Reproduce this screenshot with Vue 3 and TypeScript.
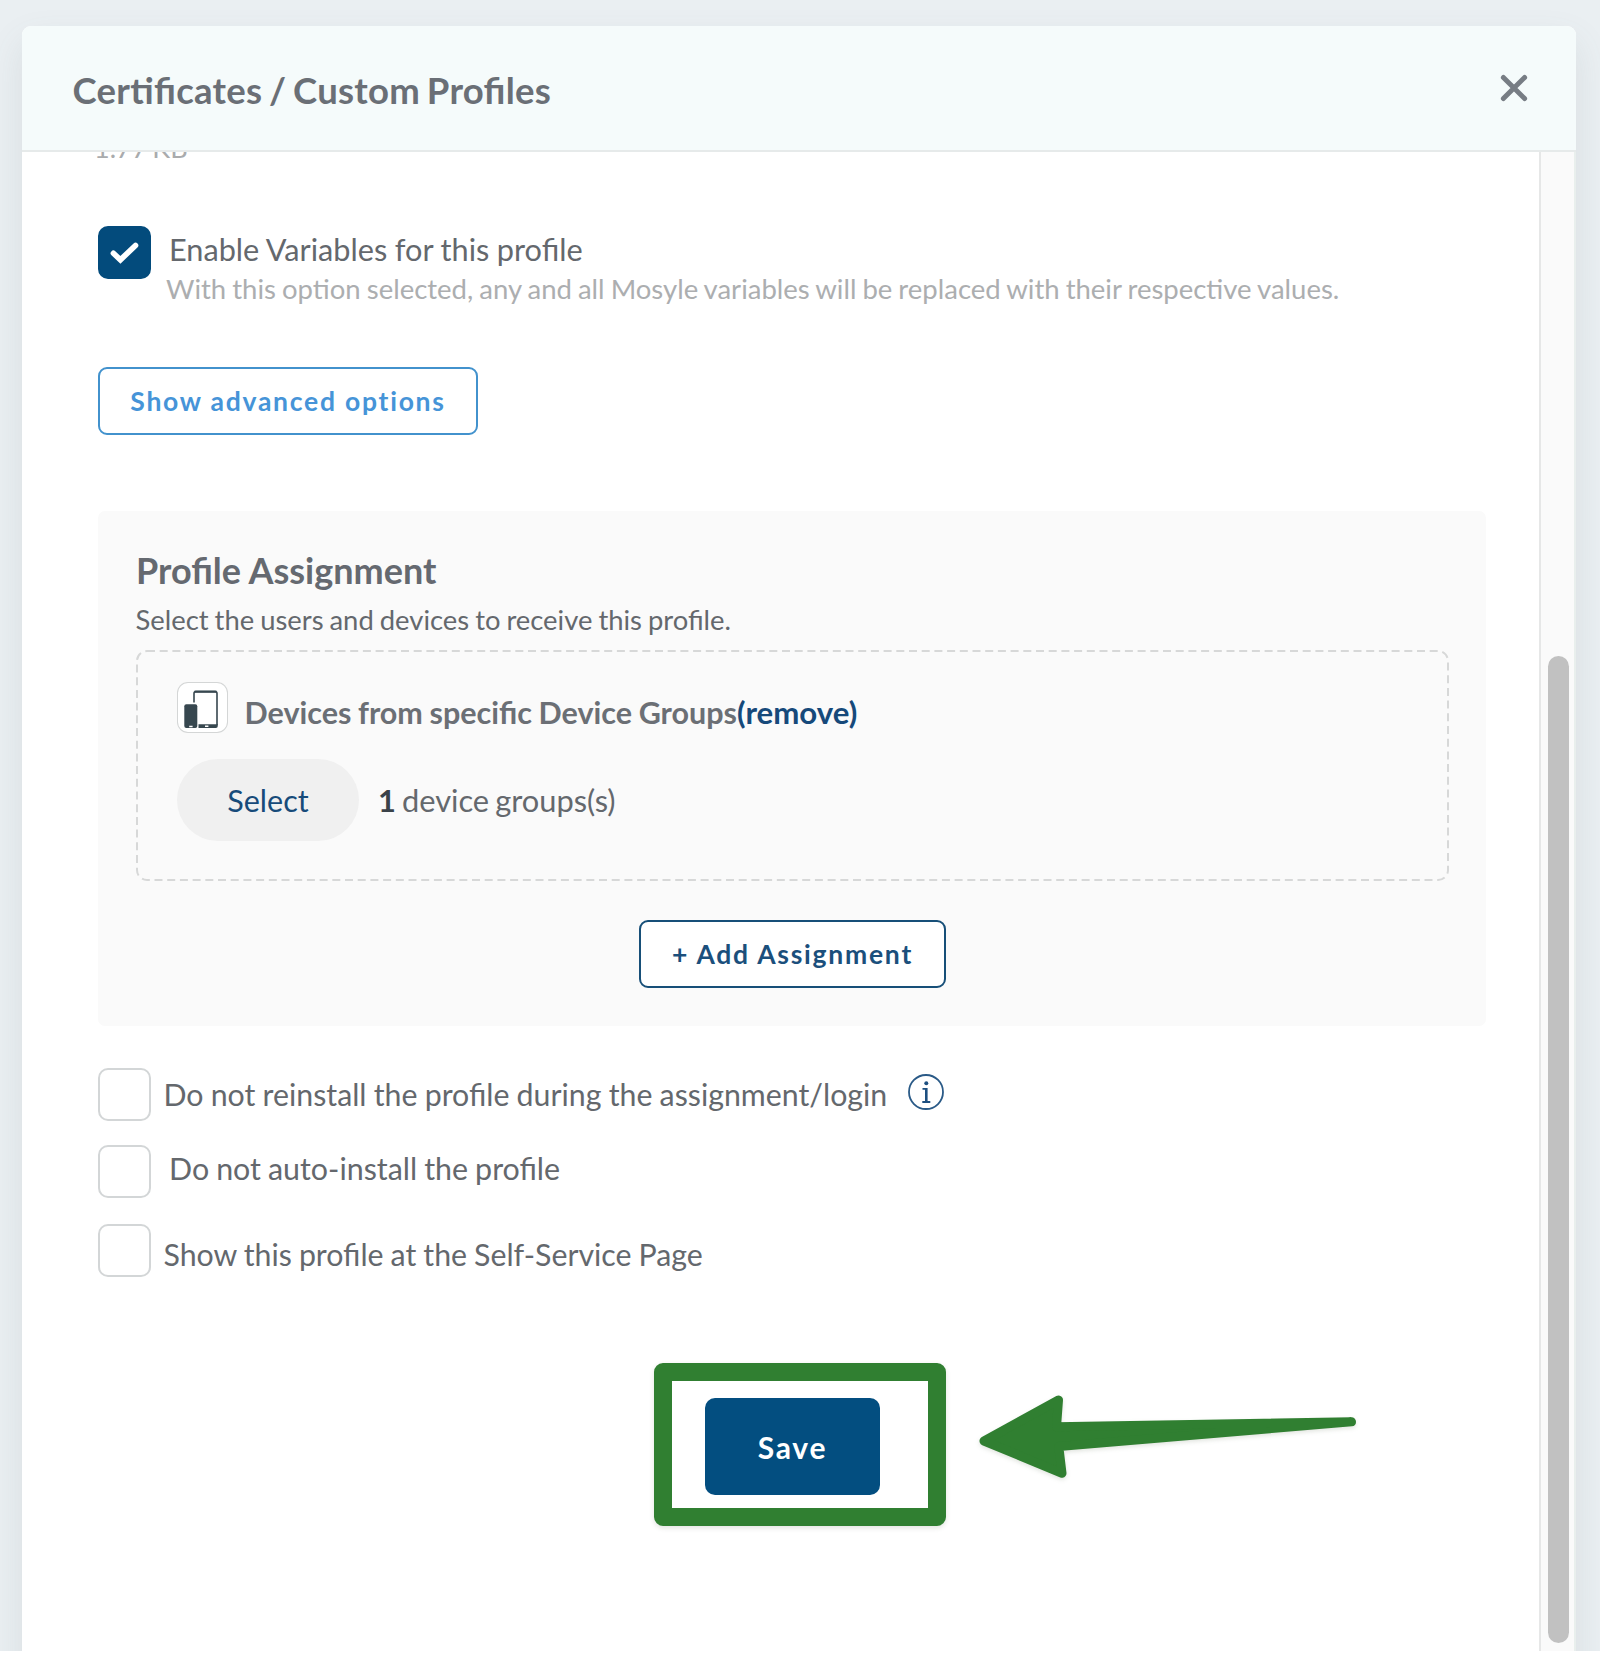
<script setup lang="ts">
import { ref } from 'vue'

interface Option {
  id: string
  label: string
  info: boolean
  checked: boolean
}

const enableVariables = ref(true)
const groupCount = ref(1)
const options = ref<Option[]>([
  { id: 'reinstall', label: 'Do not reinstall the profile during the assignment/login', info: true, checked: false },
  { id: 'auto', label: 'Do not auto-install the profile', info: false, checked: false },
  { id: 'self', label: 'Show this profile at the Self-Service Page', info: false, checked: false },
])
</script>

<template>
  <div class="page">
    <section class="modal">
      <header class="modal-head">
        <h1 class="title">Certificates / Custom Profiles</h1>
        <button class="close" aria-label="Close">
          <svg width="28" height="28" viewBox="0 0 28 28">
            <path d="M3.4 3.4 24.6 24.6M24.6 3.4 3.4 24.6" fill="none" stroke="#777d84" stroke-width="5" stroke-linecap="round" />
          </svg>
        </button>
      </header>

      <div class="modal-body">
        <main class="content">
          <div class="file-size">1.77 KB</div>

          <div class="enable">
            <span class="check" :class="{ on: enableVariables }" @click="enableVariables = !enableVariables">
              <svg v-if="enableVariables" width="30" height="24" viewBox="0 0 30 24">
                <path d="M3.400 12.300 10.400 18.800 25.500 4.500" fill="none" stroke="#fff" stroke-width="5.600" stroke-linecap="round" />
              </svg>
            </span>
            <div class="enable-text">
              <div class="enable-label">Enable Variables for this profile</div>
              <div class="enable-hint">With this option selected, any and all Mosyle variables will be replaced with their respective values.</div>
            </div>
          </div>

          <button class="outline light">Show advanced options</button>

          <div class="panel">
            <h2 class="panel-title">Profile Assignment</h2>
            <p class="panel-hint">Select the users and devices to receive this profile.</p>

            <div class="group">
              <svg class="dashes" width="1313" height="231">
                <rect x="1" y="1" width="1311" height="229" rx="10" fill="none" stroke="#d7d8d8" stroke-width="2" stroke-dasharray="8 4.7" />
              </svg>
              <div class="group-head">
                <span class="device-icon">
                  <svg width="51" height="51" viewBox="0 0 51 51">
                    <path d="M17 20.500V11.500a2 2 0 0 1 2-2H38a2 2 0 0 1 2 2V43" fill="none" stroke="#37474f" stroke-width="1.600" />
                    <path d="M17.500 9.700H39.500" stroke="#37474f" stroke-width="2.200" />
                    <path d="M21.500 42.300H40.800V44a2 2 0 0 1-2 2H21.500z" fill="#37474f" />
                    <rect x="7.300" y="22.300" width="13" height="23.600" rx="2" fill="#37474f" />
                    <path d="M12.200 44.500h3.400M28 44.200h3.400" stroke="#fff" stroke-width="1.400" />
                  </svg>
                </span>
                <strong class="group-name">Devices from specific Device Groups<a class="remove">(remove)</a></strong>
              </div>
              <div class="group-row">
                <button class="select">Select</button>
                <span class="count"><b>{{ groupCount }}</b> device groups(s)</span>
              </div>
            </div>

            <button class="outline dark">+ Add Assignment</button>
          </div>

          <div class="options">
            <div v-for="o in options" :key="o.id" class="option" :class="o.id">
              <span class="check" :class="{ on: o.checked }" @click="o.checked = !o.checked"></span>
              <span class="option-label">{{ o.label }}</span>
              <svg v-if="o.info" class="info" width="36" height="36" viewBox="0 0 36 36">
                <circle cx="18" cy="18" r="17" fill="none" stroke="#2a5a87" stroke-width="1.800" />
                <circle cx="18.300" cy="9.300" r="2" fill="#1d4f80" />
                <path d="M14.500 14.800H18.900M14.300 28H22.300" fill="none" stroke="#1d4f80" stroke-width="1.800" />
                <path d="M18.300 14V28" stroke="#1d4f80" stroke-width="2.600" />
              </svg>
            </div>
          </div>

          <div class="save-area">
            <div class="highlight">
              <button class="save">Save</button>
            </div>
            <svg class="arrow" width="390" height="96" viewBox="0 0 390 96">
              <path class="arrow-shape" d="M6 47 80.500 6 78.500 32.800 373.500 27.800 80.800 52.600 84 79.300Z" />
            </svg>
          </div>
        </main>

        <aside class="track"><div class="thumb"></div></aside>
      </div>
    </section>
  </div>
</template>

<style>
body {
  margin: 0;
  background: #fff;
}
</style>

<style scoped>
* {
  box-sizing: border-box;
}
.page {
  width: 1600px;
  height: 1651px;
  padding: 26px 24px 0 22px;
  overflow: hidden;
  background: #eaeff2;
  font-family: Lato, 'Liberation Sans', sans-serif;
  color: #64686d;
}
h1, h2, p {
  margin: 0;
}
button {
  padding: 0;
  font-family: inherit;
  cursor: pointer;
}
.modal {
  width: 1554px;
  height: 1700px;
  border-radius: 9px 9px 0 0;
  background: #fff;
  box-shadow: 0 16px 36px rgba(90, 110, 110, 0.12);
}
.modal-head {
  display: flex;
  justify-content: space-between;
  align-items: flex-start;
  height: 126px;
  padding: 41px 48px 0 50px;
  border-bottom: 2px solid #e6eaea;
  border-radius: 9px 9px 0 0;
  background: #f5fbfb;
}
.title {
  margin-left: 0.5px;
  font-size: 36.5px;
  line-height: 47px;
  font-weight: 700;
  letter-spacing: 0.28px;
  word-spacing: -2.5px;
  font-feature-settings: 'liga' 1;
  color: #6a6f76;
  white-space: nowrap;
}
.close {
  height: 28px;
  margin-top: 7px;
  border: 0;
  background: none;
}
.close svg {
  display: block;
}
.modal-body {
  display: flex;
  height: 1499px;
  overflow: hidden;
}
.content {
  flex: 1;
  padding-left: 76px;
}
.file-size {
  height: 32px;
  margin: -20px 0 62px -4px;
  font-size: 27px;
  line-height: 32px;
  word-spacing: -2px;
  color: #a9abad;
  clip-path: inset(20px 0 0 0);
}
.check {
  display: flex;
  flex: none;
  align-items: center;
  justify-content: center;
  width: 53px;
  height: 53px;
  border: 2px solid #d3d6d7;
  border-radius: 10px;
  background: #fff;
}
.check.on {
  border-color: #034b7c;
  background: #034b7c;
}
.enable {
  display: flex;
  height: 141px;
}
.enable-text {
  padding-top: 3px;
  white-space: nowrap;
}
.enable-label {
  margin-left: 18px;
  font-size: 30.7px;
  line-height: 41px;
  word-spacing: -0.3px;
}
.enable-hint {
  margin-left: 15px;
  font-size: 27.5px;
  line-height: 37px;
  word-spacing: -1px;
  color: #acaeb0;
}
.outline {
  display: block;
  height: 68px;
  padding-bottom: 1px;
  border: 2px solid;
  border-radius: 9px;
  background: #fff;
  font-size: 26.5px;
  font-weight: 700;
  letter-spacing: 1.75px;
  white-space: nowrap;
}
.light {
  width: 380px;
  border-color: #4292cd;
  color: #4694d8;
}
.dark {
  width: 307px;
  margin: 39px 0 0 503px;
  border-color: #174f78;
  color: #1b4f7c;
}
.panel {
  width: 1388px;
  height: 515px;
  margin-top: 76px;
  padding: 36px 0 0 38px;
  border-radius: 7px;
  background: #fafafa;
}
.panel-title {
  font-size: 36px;
  line-height: 46px;
  font-weight: 700;
  color: #656970;
}
.panel-hint {
  font-size: 27.4px;
  line-height: 36px;
  margin: 9px 0 0 -0.5px;
  word-spacing: -1px;
}
.group {
  position: relative;
  width: 1313px;
  height: 231px;
  margin-top: 12px;
  padding: 32px 0 0 41px;
}
.dashes {
  position: absolute;
  inset: 0;
}
.group-head {
  display: flex;
  align-items: flex-start;
  height: 51px;
}
.device-icon {
  width: 51px;
  height: 51px;
  border-radius: 11px;
  background: #fff;
  box-shadow: inset 0 0 0 1px #d4d6d6;
}
.device-icon svg {
  display: block;
}
.group-name {
  margin: 10px 0 0 16.5px;
  font-size: 30.5px;
  line-height: 40px;
  font-weight: 700;
  word-spacing: -0.8px;
  color: #6b6f75;
  white-space: nowrap;
}
.remove {
  font-size: 31.2px;
  color: #16497a;
}
.group-row {
  display: flex;
  align-items: center;
  margin-top: 26px;
}
.select {
  width: 182px;
  height: 82px;
  border: 0;
  border-radius: 41px;
  background: #f0f0f0;
  font-size: 30.5px;
  color: #174b7a;
}
.count {
  margin: 1px 0 0 19px;
  font-size: 30.8px;
  line-height: 40px;
  word-spacing: -1.8px;
}
.count b {
  color: #3a4249;
}
.options {
  margin-top: 42px;
}
.option {
  display: flex;
  align-items: flex-start;
  font-size: 30.3px;
  line-height: 40px;
  word-spacing: -0.75px;
}
.option-label {
  margin-left: 12.5px;
  padding-top: 6px;
}
.reinstall {
  word-spacing: -0.55px;
}
.auto {
  margin-top: 24px;
  font-size: 30.4px;
}
.auto .option-label {
  margin-left: 18px;
  padding-top: 3px;
}
.self {
  margin-top: 26px;
}
.self .option-label {
  padding-top: 10px;
}
.info {
  margin: 6px 0 0 21px;
}
.save-area {
  display: flex;
  margin: 86px 0 0 556px;
}
.highlight {
  width: 292px;
  height: 163px;
  padding: 17px 0 0 33px;
  border: 18px solid #307f31;
  border-radius: 9px;
  box-shadow: 0 2px 5px rgba(60, 80, 50, 0.15);
}
.save {
  display: block;
  width: 175px;
  height: 97px;
  border: 0;
  border-radius: 10px;
  background: #034e80;
  color: #fff;
  font-size: 30px;
  font-weight: 700;
  letter-spacing: 1.8px;
}
.arrow {
  margin: 31px 0 0 32px;
  filter: drop-shadow(0 2px 2px rgba(60, 80, 50, 0.15));
}
.arrow-shape {
  fill: #307f31;
  stroke: #307f31;
  stroke-width: 9px;
  stroke-linejoin: round;
}
.track {
  width: 37px;
  border-left: 2px solid #e6e7e7;
  border-right: 2px solid #e9efed;
  background: #fafafa;
}
.thumb {
  width: 21px;
  height: 987px;
  margin: 504px 0 0 7px;
  border-radius: 11px;
  background: #c1c1c1;
}
</style>
